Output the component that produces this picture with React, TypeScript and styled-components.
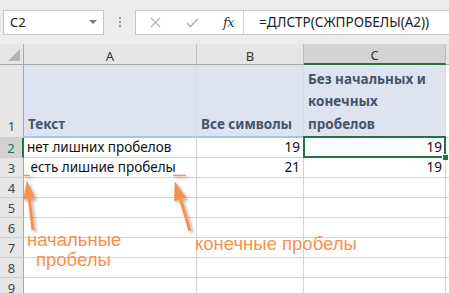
import { Fragment } from "react";
import styled, { createGlobalStyle } from "styled-components";

const GlobalStyle = createGlobalStyle`
  html, body {
    margin: 0;
    padding: 0;
    background: #ffffff;
    overflow: hidden;
  }
  body {
    font-family: "Noto Sans", "Open Sans", sans-serif;
  }
`;

const Sheet = styled.div`
  position: relative;
  width: 449px;
  height: 293px;
  overflow: hidden;
  background: #ffffff;
`;

const FormulaBar = styled.div`
  height: 44px;
  display: flex;
  align-items: center;
  padding-left: 3px;
  background: #ececec;
  box-sizing: border-box;
`;

const NameBox = styled.div`
  width: 101px;
  height: 25px;
  box-sizing: border-box;
  background: #fff;
  border: 1px solid #c6c6c6;
  display: flex;
  align-items: center;
  justify-content: space-between;
  padding: 0 6px;
  font-size: 13px;
  color: #222;
`;

const DropArrow = styled.span`
  width: 0;
  height: 0;
  border-left: 4px solid transparent;
  border-right: 4px solid transparent;
  border-top: 4px solid #777;
`;

const Dots = styled.div`
  width: 31px;
  display: flex;
  flex-direction: column;
  align-items: center;
  gap: 2px;

  span {
    width: 2px;
    height: 2px;
    background: #9a9a9a;
  }
`;

const FormulaBox = styled.div`
  flex: 1;
  height: 25px;
  display: flex;
  box-sizing: border-box;
  background: #fff;
  border: 1px solid #c6c6c6;
  border-right: none;
`;

const ButtonArea = styled.div`
  width: 108px;
  display: flex;
  align-items: center;
  border-right: 1px solid #d4d4d4;
  box-sizing: border-box;
`;

const ToolIcon = styled.span<{ $left: number }>`
  margin-left: ${({ $left }) => $left}px;
  display: flex;
  align-items: center;
`;

const FxText = styled.span`
  margin-left: 24px;
  font-family: "DejaVu Serif", "Liberation Serif", serif;
  font-style: italic;
  font-size: 13px;
  color: #333;
  letter-spacing: -0.5px;
`;

const FormulaText = styled.div`
  padding-left: 15px;
  display: flex;
  align-items: center;
  font-size: 13.5px;
  color: #222;
  white-space: nowrap;
`;

const Grid = styled.div`
  display: grid;
  grid-template-columns: 24px 173px 107px 142px 1fr;
  grid-template-rows: 21px 73px repeat(8, 20px);
`;

const Corner = styled.div`
  background: #e6e6e6;
  border-right: 1px solid #a8a8a8;
  border-bottom: 1px solid #a8a8a8;
  display: flex;
  align-items: flex-end;
  justify-content: flex-end;
  padding: 0 3px 3px 0;
  box-sizing: border-box;
`;

const CornerTriangle = styled.span`
  width: 0;
  height: 0;
  border-left: 12px solid transparent;
  border-bottom: 12px solid #b5b5b5;
`;

const ColHead = styled.div<{ $active?: boolean }>`
  background: ${({ $active }) => ($active ? "#d3d3d3" : "#e6e6e6")};
  border-right: 1px solid #bdbdbd;
  border-bottom: ${({ $active }) => ($active ? "2px solid #217346" : "1px solid #a8a8a8")};
  box-sizing: border-box;
  display: flex;
  align-items: center;
  justify-content: center;
  padding-top: 3px;
  font-size: 13px;
  color: #333;
`;

const RowHead = styled.div<{ $active?: boolean; $bottom?: boolean }>`
  background: ${({ $active }) => ($active ? "#d3d3d3" : "#e6e6e6")};
  border-right: ${({ $active }) => ($active ? "2px solid #217346" : "1px solid #a8a8a8")};
  border-bottom: 1px solid #cfcfcf;
  box-sizing: border-box;
  display: flex;
  align-items: ${({ $bottom }) => ($bottom ? "flex-end" : "center")};
  justify-content: center;
  padding-bottom: ${({ $bottom }) => ($bottom ? "2px" : "0")};
  font-size: 13px;
  color: ${({ $active }) => ($active ? "#217346" : "#444")};
`;

const HeadCell = styled.div`
  background: #dde3f1;
  border-right: 1px solid #d7dbe6;
  border-bottom: 2px solid #a9c3e8;
  box-sizing: border-box;
  display: flex;
  align-items: flex-end;
  padding: 0 4px 1px 4px;
  font-weight: 700;
  font-size: 13.5px;
  line-height: 22.5px;
  color: #44546a;
`;

const Cell = styled.div<{ $right?: boolean }>`
  border-right: 1px solid #d4d4d4;
  border-bottom: 1px solid #d4d4d4;
  box-sizing: border-box;
  display: flex;
  align-items: flex-end;
  justify-content: ${({ $right }) => ($right ? "flex-end" : "flex-start")};
  padding: 0 3px 1px 3px;
  font-size: 13.5px;
  line-height: 18px;
  color: #111;
  white-space: pre;
`;

const SelectedCell = styled(Cell)`
  position: relative;

  &::after {
    content: "";
    position: absolute;
    left: -1px;
    top: -2px;
    right: -1px;
    bottom: -1px;
    border: 2px solid #217346;
  }

  &::before {
    content: "";
    position: absolute;
    right: -4px;
    bottom: -4px;
    width: 5px;
    height: 5px;
    background: #217346;
    border: 1px solid #fff;
    z-index: 2;
  }
`;

const Overlay = styled.svg`
  position: absolute;
  left: 0;
  top: 0;
  pointer-events: none;
`;

const Note = styled.div<{ $x: number; $y: number }>`
  position: absolute;
  left: ${({ $x }) => $x}px;
  top: ${({ $y }) => $y}px;
  font-family: "Liberation Sans", Arial, sans-serif;
  font-size: 18.5px;
  line-height: 20px;
  color: #f7914f;
  white-space: nowrap;
`;

const rows = [4, 5, 6, 7, 8, 9];

export default function App() {
  return (
    <>
      <GlobalStyle />
      <Sheet>
        <FormulaBar>
          <NameBox>
            C2
            <DropArrow />
          </NameBox>
          <Dots>
            <span />
            <span />
            <span />
          </Dots>
          <FormulaBox>
            <ButtonArea>
              <ToolIcon $left={14}>
                <svg width="11" height="11" viewBox="0 0 11 11">
                  <path d="M1 1 L10 10 M10 1 L1 10" stroke="#b4b4b4" strokeWidth="1.3" />
                </svg>
              </ToolIcon>
              <ToolIcon $left={25}>
                <svg width="13" height="11" viewBox="0 0 13 11">
                  <path d="M1 6 L4.5 9.5 L12 1.5" stroke="#b4b4b4" strokeWidth="1.6" fill="none" />
                </svg>
              </ToolIcon>
              <FxText>fx</FxText>
            </ButtonArea>
            <FormulaText>=ДЛСТР(СЖПРОБЕЛЫ(A2))</FormulaText>
          </FormulaBox>
        </FormulaBar>

        <Grid>
          <Corner>
            <CornerTriangle />
          </Corner>
          <ColHead>A</ColHead>
          <ColHead>B</ColHead>
          <ColHead $active>C</ColHead>
          <ColHead />

          <RowHead $bottom>1</RowHead>
          <HeadCell>Текст</HeadCell>
          <HeadCell>Все символы</HeadCell>
          <HeadCell>
            Без начальных и
            <br />
            конечных
            <br />
            пробелов
          </HeadCell>
          <Cell />

          <RowHead $active>2</RowHead>
          <Cell>нет лишних пробелов</Cell>
          <Cell $right>19</Cell>
          <SelectedCell $right>19</SelectedCell>
          <Cell />

          <RowHead>3</RowHead>
          <Cell>{" есть лишние пробелы  "}</Cell>
          <Cell $right>21</Cell>
          <Cell $right>19</Cell>
          <Cell />

          {rows.map((n) => (
            <Fragment key={n}>
              <RowHead>{n}</RowHead>
              <Cell />
              <Cell />
              <Cell />
              <Cell />
            </Fragment>
          ))}
        </Grid>

        <Overlay width="449" height="293" viewBox="0 0 449 293">
          <defs>
            <filter id="shade" x="-50%" y="-50%" width="200%" height="200%">
              <feDropShadow dx="2" dy="2" stdDeviation="1.5" floodColor="#000" floodOpacity="0.3" />
            </filter>
          </defs>
          <g fill="#f7914f" stroke="#f7914f" filter="url(#shade)">
            <path d="M24 175.5 H30" strokeWidth="1.5" fill="none" />
            <path d="M173 175.5 H186" strokeWidth="1.5" fill="none" />
            <path d="M33 230 L29 196" strokeWidth="3" fill="none" />
            <path d="M27 181 L35 198 L23.3 199.5 Z" strokeWidth="0.5" />
            <path d="M190 231 L180 197" strokeWidth="3" fill="none" />
            <path d="M175 182 L186 197.6 L174.4 201 Z" strokeWidth="0.5" />
          </g>
        </Overlay>
        <Note $x={27} $y={230}>начальные</Note>
        <Note $x={36} $y={250}>пробелы</Note>
        <Note $x={195} $y={234}>конечные пробелы</Note>
      </Sheet>
    </>
  );
}
